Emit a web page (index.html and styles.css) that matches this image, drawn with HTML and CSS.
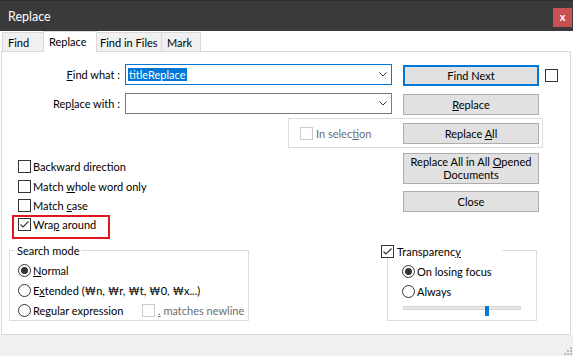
FILE: index.html
```html
<!DOCTYPE html>
<html>
<head>
  <meta charset="UTF-8">
  <title>Replace</title>
  <link rel="stylesheet" href="styles.css">
</head>
<body>
  <div class="titlebar">
    <span class="title">Replace</span>
    <span class="close-btn">x</span>
  </div>
  <div class="tabs">
    <div class="tab tab-find">Find</div>
    <div class="tab tab-replace active">Replace</div>
    <div class="tab tab-files">Find in Files</div>
    <div class="tab tab-mark">Mark</div>
  </div>

  <div class="panel">
    <div class="field-row">
      <label class="field-label"><u>F</u>ind what :</label>
      <div class="combo focused">
        <span class="selected">titleReplace</span>
        <svg class="chevron" width="8" height="5" viewBox="0 0 8 5"><polyline points="0.5,0.5 4,4 7.5,0.5" fill="none" stroke="#333" stroke-width="1"/></svg>
      </div>
      <button class="btn btn-default">Find Next</button>
      <span class="box box-free"></span>
    </div>
    <div class="field-row row-gap">
      <label class="field-label">Rep<u>l</u>ace with :</label>
      <div class="combo">
        <svg class="chevron" width="8" height="5" viewBox="0 0 8 5"><polyline points="0.5,0.5 4,4 7.5,0.5" fill="none" stroke="#333" stroke-width="1"/></svg>
      </div>
      <button class="btn btn-shift"><u>R</u>eplace</button>
    </div>
    <div class="selection-group">
      <span class="box disabled"></span>
      <span class="muted">In selec<u>t</u>ion</span>
      <button class="btn btn-all">Replace <u>A</u>ll</button>
    </div>

    <div class="lower">
      <div class="options">
        <div class="checks">
          <div class="check-row"><span class="box"></span><span>Backward direction</span></div>
          <div class="check-row"><span class="box"></span><span>Match <u>w</u>hole word only</span></div>
          <div class="check-row"><span class="box"></span><span>Match <u>c</u>ase</span></div>
          <div class="check-row marked">
            <span class="box"><svg width="11" height="11" viewBox="0 0 11 11"><polyline points="1.5,5.5 4,8 9.5,2.5" fill="none" stroke="#333" stroke-width="1.1"/></svg></span>
            <span>Wra<u>p</u> around</span>
          </div>
        </div>
        <div class="group search-group">
          <span class="group-title">Search mode</span>
          <div class="radio-row"><span class="radio checked"></span><span><u>N</u>ormal</span></div>
          <div class="radio-row"><span class="radio"></span><span>E<u>x</u>tended (₩n, ₩r, ₩t, ₩0, ₩x...)</span></div>
          <div class="radio-row">
            <span class="radio"></span><span class="regex-label">Re<u>g</u>ular expression</span>
            <span class="box disabled"></span><span class="muted newline"><u>.</u> matches newline</span>
          </div>
        </div>
      </div>

      <div class="side">
        <button class="btn btn-tall">Replace All in All <u>O</u>pened<br>Documents</button>
        <button class="btn btn-close">Close</button>
        <div class="group trans-group">
          <div class="trans-title">
            <span class="box"><svg width="11" height="11" viewBox="0 0 11 11"><polyline points="1.5,5.5 4,8 9.5,2.5" fill="none" stroke="#333" stroke-width="1.1"/></svg></span>
            <span>Transparenc<u>y</u></span>
          </div>
          <div class="radio-row"><span class="radio checked"></span><span>On losing focus</span></div>
          <div class="radio-row"><span class="radio"></span><span>Always</span></div>
          <div class="slider">
            <div class="track"></div>
            <div class="thumb"></div>
          </div>
        </div>
      </div>
    </div>
  </div>

  <div class="statusbar">
    <svg class="grip" width="10" height="10" viewBox="0 0 10 10">
      <rect x="7" y="1" width="2" height="2" fill="#bcbcbc"/>
      <rect x="4" y="4" width="2" height="2" fill="#bcbcbc"/>
      <rect x="7" y="4" width="2" height="2" fill="#bcbcbc"/>
      <rect x="1" y="7" width="2" height="2" fill="#bcbcbc"/>
      <rect x="4" y="7" width="2" height="2" fill="#bcbcbc"/>
      <rect x="7" y="7" width="2" height="2" fill="#bcbcbc"/>
    </svg>
  </div>
</body>
</html>
```

FILE: styles.css
```css
* {
  box-sizing: border-box;
}

body {
  margin: 0;
  width: 573px;
  height: 356px;
  overflow: hidden;
  background: #fff;
  font-family: Lato, 'Segoe UI', sans-serif;
  font-size: 11px;
  color: #000;
}

u {
  text-decoration: underline;
  text-underline-offset: 1px;
}

/* title bar */
.titlebar {
  height: 31px;
  background: #3a3a3a;
  border-top: 1px solid #2e2e2e;
  display: flex;
  align-items: center;
  padding-left: 8px;
  color: #fff;
}

.title {
  font-size: 12.5px;
}

.close-btn {
  margin-left: auto;
  margin-right: 1px;
  align-self: flex-start;
  margin-top: 7px;
  width: 19px;
  height: 19px;
  background: #c75050;
  color: #fff;
  font-weight: bold;
  font-size: 11px;
  line-height: 17px;
  text-align: center;
}

/* tabs */
.tabs {
  display: flex;
  align-items: flex-end;
  height: 20px;
  padding-left: 2px;
}

.tab {
  height: 19px;
  border: 1px solid #d9d9d9;
  border-bottom: none;
  background: #f0f0f0;
  padding-left: 5px;
  line-height: 19px;
  margin-right: -1px;
}

.tab.active {
  height: 21px;
  background: #fff;
  position: relative;
  z-index: 1;
  margin-bottom: -1px;
}

.tab-find { width: 42px; }
.tab-replace { width: 54px; }
.tab-files { width: 66px; padding-left: 3px; }
.tab-mark { width: 40px; }

/* main panel */
.panel {
  margin-left: 1px;
  width: 570px;
  height: 284px;
  border: 1px solid #d9d9d9;
  padding-top: 12px;
}

.field-row {
  display: flex;
  align-items: flex-start;
  height: 21px;
}

.row-gap {
  margin-top: 8px;
}

.field-label {
  width: 118px;
  text-align: right;
  line-height: 21px;
}

.combo {
  margin-left: 5px;
  width: 267px;
  height: 21px;
  border: 1px solid #7a7a7a;
  display: flex;
  align-items: center;
  padding-left: 2px;
}

.combo.focused {
  border-color: #0078d7;
}

.selected {
  background: #0078d7;
  color: #fff;
  line-height: 13px;
  padding: 0 1px;
}

.chevron {
  margin-left: auto;
  margin-right: 4px;
}

.btn {
  display: block;
  font-family: inherit;
  font-size: 11px;
  color: #000;
  background: #e1e1e1;
  border: 1px solid #adadad;
  padding: 0;
  width: 136px;
  height: 21px;
  text-align: center;
}

.btn-default {
  margin-left: 11px;
  margin-top: 1px;
  border: 2px solid #0078d7;
}

.btn-shift {
  margin-left: 11px;
  margin-top: 1px;
}

.box {
  display: inline-flex;
  flex-shrink: 0;
  width: 13px;
  height: 13px;
  border: 1px solid #333;
  background: #fff;
}

.box svg {
  display: block;
}

.box.disabled {
  border-color: #cccccc;
}

.box-free {
  margin-left: 6px;
  margin-top: 5px;
}

.muted {
  color: #6d6d6d;
}

.selection-group {
  margin-top: 4px;
  margin-left: 286px;
  width: 255px;
  height: 30px;
  border: 1px solid #dcdcdc;
  display: flex;
  align-items: center;
  gap: 3px;
  padding: 0 3px 0 11px;
}

.btn-all {
  margin-left: auto;
}

/* lower half */
.lower {
  display: flex;
  margin-top: 5px;
}

.options {
  margin-left: 7px;
  width: 240px;
}

.checks {
  height: 83px;
  padding: 4px 0 0 9px;
}

.check-row {
  display: flex;
  align-items: center;
  gap: 2px;
  height: 19.4px;
}

.marked {
  position: relative;
}

.marked::after {
  content: "";
  position: absolute;
  left: -6px;
  top: 0;
  width: 94px;
  height: 20px;
  border: 2px solid #e2161f;
}

.group {
  position: relative;
  height: 71px;
  border: 1px solid #dcdcdc;
}

.search-group {
  margin-top: 14px;
  padding: 10px 0 0 8px;
}

.group-title {
  position: absolute;
  left: 5px;
  top: -7px;
  line-height: 13px;
  padding: 0 2px;
  background: #fff;
}

.radio-row {
  display: flex;
  align-items: center;
  gap: 2px;
  height: 19.75px;
}

.radio {
  flex-shrink: 0;
  width: 13px;
  height: 13px;
  border: 1px solid #333;
  border-radius: 50%;
  background: #fff;
  display: flex;
  align-items: center;
  justify-content: center;
}

.radio.checked::after {
  content: "";
  width: 7px;
  height: 7px;
  border-radius: 50%;
  background: #333;
}

.regex-label {
  width: 107px;
}

.newline {
  margin-left: 1px;
}

.side {
  margin-left: 132px;
  width: 162px;
}

.side .btn {
  margin-left: 22px;
}

.btn-tall {
  height: 31px;
  line-height: 12.5px;
}

.btn-close {
  margin-top: 7px;
}

.trans-group {
  margin-top: 38px;
  margin-left: 6px;
  width: 150px;
  padding: 11px 0 0 14px;
}

.trans-title {
  position: absolute;
  left: -7px;
  top: -6px;
  width: 121px;
  height: 13px;
  display: flex;
  align-items: center;
  gap: 3px;
  background: #fff;
}

.slider {
  position: relative;
  margin-top: 1px;
  margin-left: 1px;
  width: 118px;
  height: 10px;
}

.track {
  margin-top: 4px;
  height: 4px;
  background: #e7e7e7;
  border: 1px solid #d6d6d6;
}

.thumb {
  position: absolute;
  left: 82px;
  top: 0;
  width: 4px;
  height: 10px;
  background: #0078d7;
}

/* bottom strip */
.statusbar {
  height: 21px;
  background: #f0f0f0;
  display: flex;
  justify-content: flex-end;
  align-items: flex-end;
}

.grip {
  display: block;
}
```
